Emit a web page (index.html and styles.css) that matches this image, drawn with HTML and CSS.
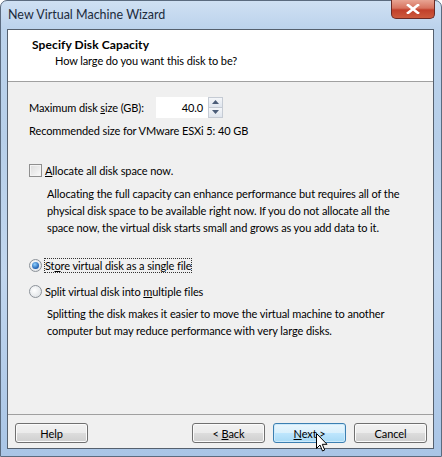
FILE: index.html
```html
<!DOCTYPE html>
<html>
<head>
<meta charset="utf-8">
<link rel="stylesheet" href="styles.css">
</head>
<body>
<div class="window">
  <div class="titlebar">
    <span class="title">New Virtual Machine Wizard</span>
    <div class="close"><svg width="14" height="10" viewBox="0 0 14 10"><path d="M2 1 L12 9 M12 1 L2 9" stroke="#fff" stroke-width="2.6" stroke-linecap="square"/></svg></div>
  </div>
  <div class="client">
    <div class="header">
      <div class="h-title">Specify Disk Capacity</div>
      <div class="h-sub">How large do you want this disk to be?</div>
    </div>
    <div class="body">
      <div class="row size-row">
        <span class="size-label">Maximum disk <u>s</u>ize (GB):</span>
        <div class="spin">
          <div class="spin-input">40.0</div>
          <div class="spin-btns">
            <div class="sb"><svg width="7" height="4" viewBox="0 0 7 4"><path d="M0 4 L3.5 0 L7 4Z" fill="#4a5c78"/></svg></div>
            <div class="sb"><svg width="7" height="4" viewBox="0 0 7 4"><path d="M0 0 L3.5 4 L7 0Z" fill="#4a5c78"/></svg></div>
          </div>
        </div>
      </div>
      <div class="rec">Recommended size for VMware ESXi 5: 40 GB</div>
      <div class="opt check-row"><span class="checkbox"></span><span><u>A</u>llocate all disk space now.</span></div>
      <p class="desc">Allocating the full capacity can enhance performance but requires all of the physical disk space to be available right now. If you do not allocate all the space now, the virtual disk starts small and grows as you add data to it.</p>
      <div class="opt radio-row r1"><span class="radio on"></span><span class="focus">St<u>o</u>re virtual disk as a single file</span></div>
      <div class="opt radio-row r2"><span class="radio"></span><span>Split virtual disk into <u>m</u>ultiple files</span></div>
      <p class="desc d2">Splitting the disk makes it easier to move the virtual machine to another computer but may reduce performance with very large disks.</p>
    </div>
    <div class="footer">
      <div class="btn"><span>Help</span></div>
      <div class="spacer"></div>
      <div class="btn"><span>&lt; <u>B</u>ack</span></div>
      <div class="btn default"><span><u>N</u>ext &gt;</span>
        <svg class="cursor" width="12" height="19" viewBox="0 0 12 19"><path d="M0.5 0.5 L0.5 15.5 L4 12 L6.5 18 L8.7 17 L6.3 11.3 L11 11.3 Z" fill="#fff" stroke="#000" stroke-width="1"/></svg>
      </div>
      <div class="btn"><span>Cancel</span></div>
    </div>
  </div>
</div>
</body>
</html>
```

FILE: styles.css
```css
html, body { margin: 0; padding: 0; }
body {
  width: 442px; height: 457px; overflow: hidden;
  font-family: "Lato", "Open Sans", sans-serif;
  font-size: 11px; letter-spacing: -0.1px; color: #000;
  background: #fff;
}
.window {
  width: 442px; height: 457px; box-sizing: border-box;
  border: 1px solid #5b6b7f; border-radius: 7px 7px 0 0;
  background: linear-gradient(180deg, #cfe0f3 0%, #bcd3ec 6%, #b7cfe9 30%, #c1d6ee 60%, #a9c5e6 100%);
  display: flex; flex-direction: column;
  padding: 0 7px 7px 6px;
  position: relative;
}
.titlebar {
  height: 28px; display: flex; align-items: flex-start; position: relative;
}
.title {
  margin-top: 6px; margin-left: 1px; font-size: 12.5px; letter-spacing: 0; color: #1c2b3c;
}
.close {
  position: absolute; right: -1px; top: -1px; width: 44px; height: 19px;
  box-sizing: border-box; border: 1px solid #6b2a25; border-top: none;
  border-radius: 0 0 5px 5px;
  background: linear-gradient(180deg, #e8a493 0%, #d7735f 45%, #c1402b 55%, #cd5a3d 100%);
  display: flex; align-items: center; justify-content: center;
}
.client {
  flex: 1; display: flex; flex-direction: column;
  background: #f0f0f0; border: 1px solid #55606e;
}
.header {
  background: #fff; height: 52px; border-bottom: 1px solid #a0a0a0;
  box-sizing: border-box; padding: 7px 0 0 24px;
}
.h-title { font-weight: bold; font-size: 12px; letter-spacing: 0.1px; }
.h-sub { margin: 2px 0 0 23px; letter-spacing: -0.1px; }
.body { flex: 1; padding: 14px 0 0 21px; }
.size-row { display: flex; align-items: center; height: 22px; }
.size-label { width: 127px; }
.spin { display: flex; }
.spin-input {
  width: 52px; height: 21px; box-sizing: border-box; background: #fff;
  border: 1px solid #fff; text-align: right; padding: 3px 4px 0 0;
}
.spin-btns { display: flex; flex-direction: column; width: 15px; border: 1px solid #c5cbd4; height: 21px; box-sizing: border-box; }
.sb {
  flex: 1; display: flex; align-items: center; justify-content: center;
  background: linear-gradient(180deg, #f4f6f9, #dfe5ee); border-bottom: 1px solid #c5cbd4;
}
.sb:last-child { border-bottom: none; }
.rec { margin-top: 6px; }
.opt { display: flex; align-items: center; height: 16px; }
.check-row { margin-top: 25px; }
.checkbox {
  width: 11px; height: 11px; border: 1px solid #8f8f8f; background: linear-gradient(135deg, #dcdcdc, #fafafa);
  margin-right: 3px; box-shadow: inset 0 0 0 1px #f4f4f4;
}
.radio {
  width: 11px; height: 11px; border-radius: 50%; border: 1px solid #8c9299;
  background: radial-gradient(circle at 40% 40%, #fff, #d8dce0);
  margin-right: 3px; position: relative;
}
.radio.on::after {
  content: ""; position: absolute; left: 2px; top: 2px; width: 7px; height: 7px; border-radius: 50%;
  background: radial-gradient(circle at 40% 35%, #8ed0ff, #1f5fb0 70%);
}
.desc { margin: 7px 0 0 18px; line-height: 17px; width: 362px; }
.r1 { margin-top: 21px; }
.focus { outline: 1px dotted #333; outline-offset: 0; }
.r2 { margin-top: 10px; }
.d2 { margin-top: 6px; }
.footer {
  height: 34px; border-top: 1px solid #a0a0a0; display: flex; align-items: flex-start;
  padding: 8px 6px 0 7px; gap: 8px; box-sizing: border-box;
}
.spacer { flex: 1; }
.btn {
  width: 73px; height: 20px; box-sizing: border-box; border: 1px solid #707070; border-radius: 3px;
  background: linear-gradient(180deg, #f2f2f2 0%, #ebebeb 50%, #dddddd 51%, #cfcfcf 100%);
  display: flex; align-items: center; justify-content: center; position: relative;
  box-shadow: inset 0 0 0 1px #fbfbfb;
}
.btn.default {
  border-color: #3c7fb1;
  background: linear-gradient(180deg, #eaf6fd 0%, #d9f0fc 50%, #bee6fd 51%, #a7d9f5 100%);
  box-shadow: inset 0 0 0 1px #cdeafb;
}
.cursor { position: absolute; left: 42px; top: 9px; }
```
